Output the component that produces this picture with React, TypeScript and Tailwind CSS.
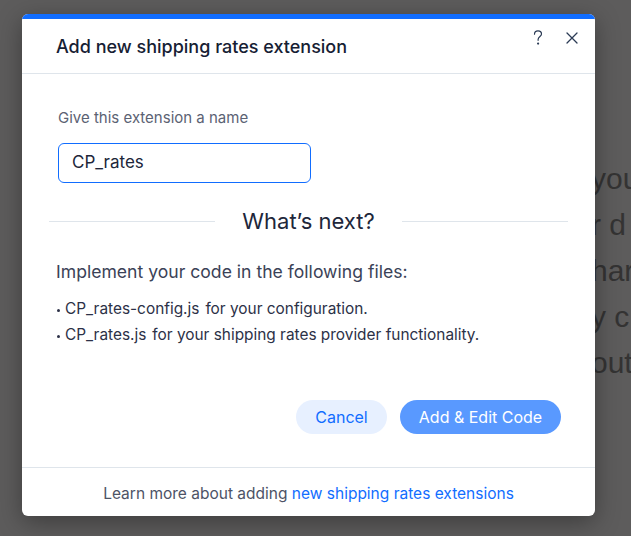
import React from "react";

const font = { fontFamily: "Inter, 'Liberation Sans', sans-serif" };

function HelpIcon() {
  return (
    <svg width="14" height="18" viewBox="0 0 14 18" fill="none" stroke="#2b3b55" strokeWidth="1.2" strokeLinecap="round">
      <path d="M3.5 5.2c0-2.1 1.6-3.4 3.5-3.4s3.5 1.3 3.5 3.1c0 2.5-3.4 2.6-3.4 5.6v0.8" />
      <circle cx="7.1" cy="14.6" r="0.5" fill="#2b3b55" />
    </svg>
  );
}

function CloseIcon() {
  return (
    <svg width="14" height="14" viewBox="0 0 14 14" fill="none" stroke="#2b3b55" strokeWidth="1.3" strokeLinecap="round">
      <path d="M2 2l10 10M12 2L2 12" />
    </svg>
  );
}

function Bullet({ file, text }: { file: string; text: string }) {
  return (
    <li className="flex items-center">
      <span className="ml-[1px] mr-[5px] mt-[2px] h-[3px] w-[3px] rounded-full bg-[#2c3147]" />
      <span>{file}</span>
      <span className="ml-[6px]">{text}</span>
    </li>
  );
}

export default function App() {
  const behind = ["you", "r d", "har", "y c", "out"];
  return (
    <div className="relative h-[536px] w-[631px] overflow-hidden bg-[#5d5c5c]" style={font}>
      {/* page behind the overlay */}
      <div className="flex h-full justify-end pt-[158px]">
        <div className="flex w-[40px] flex-col gap-[4px] text-[30px] leading-[42px] text-[#2a2a2a] opacity-80" style={{ fontFamily: "'Liberation Sans', sans-serif" }}>
          {behind.map((w) => (
            <span key={w} className="whitespace-nowrap">
              {w}
            </span>
          ))}
        </div>
      </div>

      {/* dialog */}
      <div className="absolute left-[22px] top-[14px] flex w-[573px] flex-col overflow-hidden rounded-[6px] bg-white shadow-[0_6px_24px_rgba(0,0,0,0.35)]">
        <div className="h-[5px] bg-[#116dff]" />
        <div className="flex h-[55px] items-start justify-between border-b border-[#dfe5eb] pl-[34px] pr-[16px]">
          <h2 className="mt-[16px] text-[18px] font-medium leading-6 text-[#162033]">
            Add new shipping rates extension
          </h2>
          <div className="mt-[10px] flex items-center gap-[20px]">
            <HelpIcon />
            <CloseIcon />
          </div>
        </div>

        <div className="flex flex-col px-[36px] pt-[34px]">
          <label className="text-[15px] leading-5 text-[#5b6273]">Give this extension a name</label>
          <div className="mt-[15px] flex h-[40px] w-[253px] items-center rounded-[6px] border border-[#116dff] px-[13px] text-[17px] text-[#20263a]">
            CP_rates
          </div>

          <div className="-mx-[9px] mt-[24px] flex items-center gap-[27px]">
            <div className="h-px flex-1 bg-[#dfe5eb]" />
            <span className="text-[22px] leading-7 text-[#20263a]">What’s next?</span>
            <div className="h-px flex-1 bg-[#dfe5eb]" />
          </div>

          <p className="-ml-[2px] mt-[25px] text-[17.6px] leading-6 text-[#3b4257]">
            Implement your code in the following files:
          </p>
          <ul className="-ml-[2px] mt-[12px] text-[15.4px] leading-[26px] text-[#2c3147]">
            <Bullet file="CP_rates-config.js" text="for your configuration." />
            <Bullet file="CP_rates.js" text="for your shipping rates provider functionality." />
          </ul>

          <div className="-mr-[2px] mt-[52px] flex justify-end gap-[13px]">
            <button className="h-[34px] w-[91px] rounded-full bg-[#e7f0ff] text-[16px] text-[#116dff]">Cancel</button>
            <button className="h-[34px] w-[161px] rounded-full bg-[#5999ff] text-[16px] text-white">Add &amp; Edit Code</button>
          </div>
        </div>

        <div className="mt-[33px] flex h-[49px] items-center justify-center border-t border-[#dfe5eb] pt-[3px] text-[15.5px] text-[#4d5366]">
          Learn more about adding&nbsp;<span className="text-[#116dff]">new shipping rates extensions</span>
        </div>
      </div>
    </div>
  );
}
